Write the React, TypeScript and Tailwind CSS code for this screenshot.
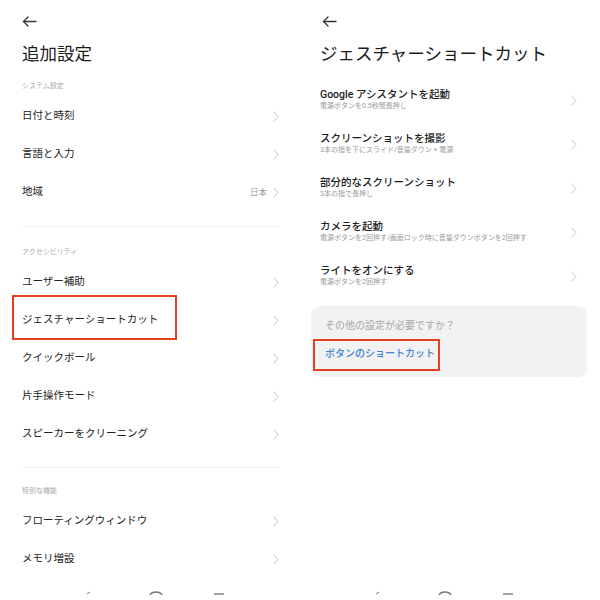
const font = { fontFamily: 'Roboto, "Noto Sans CJK JP", sans-serif' }

const Back = () => (
    <svg width="15" height="11" viewBox="0 0 15 11" fill="none" stroke="#333" strokeWidth="1.3" strokeLinecap="round" strokeLinejoin="round">
        <path d="M1.5 5.5H14" />
        <path d="M6 1L1.5 5.5L6 10" />
    </svg>
)

const Chevron = () => (
    <svg width="6" height="11" viewBox="0 0 6 11" fill="none" stroke="#c4c4c4" strokeWidth="1" strokeLinecap="round" strokeLinejoin="round">
        <path d="M1 1L5 5.5L1 10" />
    </svg>
)

const NavBar = () => (
    <div className="flex items-start h-[12px] shrink-0">
        <svg className="ml-[64px]" width="6" height="8" viewBox="0 0 6 8">
            <path d="M1 6L4 4" stroke="#999" strokeWidth="1.2" />
        </svg>
        <svg className="ml-[56px]" width="16" height="10" viewBox="0 0 16 10" fill="none">
            <path d="M2 7C4 3 12 3 14 7" stroke="#777" strokeWidth="1.4" />
        </svg>
        <svg className="ml-[48px]" width="14" height="10" viewBox="0 0 14 10">
            <path d="M2 6H12" stroke="#777" strokeWidth="1.4" />
        </svg>
    </div>
)

const Row = ({ label, value, boxed }: { label: string; value?: string; boxed?: boolean }) => (
    <div className="relative flex items-center justify-between h-[38px] shrink-0">
        <span className="text-[10.5px] text-[#222]">{label}</span>
        <div className="flex items-center gap-[6px]">
            {value && <span className="text-[8.5px] text-[#9a9a9a]">{value}</span>}
            <Chevron />
        </div>
        {boxed && (
            <div className="absolute -left-[10px] -top-[6px] w-[165px] h-[45px] border-[2.5px] border-[#e2401f]" />
        )}
    </div>
)

const Label = ({ text }: { text: string }) => (
    <div className="h-[22px] flex items-center text-[7px] text-[#a8a8a8]">{text}</div>
)

const shortcuts = [
    { title: 'Google アシスタントを起動', sub: '電源ボタンを0.5秒間長押し' },
    { title: 'スクリーンショットを撮影', sub: '3本の指を下にスライド/音量ダウン + 電源' },
    { title: '部分的なスクリーンショット', sub: '3本の指で長押し' },
    { title: 'カメラを起動', sub: '電源ボタンを2回押す/画面ロック時に音量ダウンボタンを2回押す' },
    { title: 'ライトをオンにする', sub: '電源ボタンを2回押す' },
]

export default function App() {
    return (
        <div className="w-[600px] h-[600px] flex bg-white overflow-hidden" style={font}>
            <div className="w-[300px] pl-[22px] pr-[21px] flex flex-col">
                <div className="h-[41px] pt-[1px] flex items-center shrink-0"><Back /></div>
                <div className="h-[26px] flex items-center text-[17.5px] text-[#1a1a1a] shrink-0">追加設定</div>
                <div className="mt-[8px] shrink-0"><Label text="システム設定" /></div>
                <Row label="日付と時刻" />
                <Row label="言語と入力" />
                <Row label="地域" value="日本" />
                <div className="mt-[15px] border-t border-[#eeeeee] shrink-0" />
                <div className="mt-[14px] shrink-0"><Label text="アクセシビリティ" /></div>
                <Row label="ユーザー補助" />
                <Row label="ジェスチャーショートカット" boxed />
                <Row label="クイックボール" />
                <Row label="片手操作モード" />
                <Row label="スピーカーをクリーニング" />
                <div className="mt-[14px] border-t border-[#eeeeee] shrink-0" />
                <div className="mt-[12px] shrink-0"><Label text="特別な機能" /></div>
                <Row label="フローティングウィンドウ" />
                <Row label="メモリ増設" />
                <div className="mt-[10px]">
                    <NavBar />
                </div>
            </div>

            <div className="w-[300px] pl-[11px] pr-[13px] flex flex-col">
                <div className="h-[41px] pt-[1px] flex items-center pl-[11px] shrink-0"><Back /></div>
                <div className="h-[26px] flex items-center pl-[9px] text-[17.5px] text-[#1a1a1a] shrink-0">ジェスチャーショートカット</div>
                <div className="mt-[11px] flex flex-col shrink-0">
                    {shortcuts.map((s) => (
                        <div key={s.title} className="h-[44px] flex items-center justify-between pl-[9px] pr-[10px]">
                            <div className="flex flex-col">
                                <span className="text-[10.5px] leading-[13px] font-medium text-[#1c1c1c]">{s.title}</span>
                                <span className="text-[7px] leading-[11px] text-[#9a9a9a]">{s.sub}</span>
                            </div>
                            <Chevron />
                        </div>
                    ))}
                </div>
                <div className="relative mt-[8px] h-[71px] shrink-0 rounded-[9px] bg-[#f2f2f2] pl-[14px] pt-[13px]">
                    <div className="text-[10px] leading-[14px] text-[#a6a6a6]">その他の設定が必要ですか？</div>
                    <div className="mt-[14px] text-[10px] leading-[14px] font-medium text-[#3c82d2]">ボタンのショートカット</div>
                    <div className="absolute left-[2px] top-[33px] w-[127px] h-[32px] border-[2.5px] border-[#e2401f]" />
                </div>
                <div className="mt-[211px]">
                    <NavBar />
                </div>
            </div>
        </div>
    )
}
